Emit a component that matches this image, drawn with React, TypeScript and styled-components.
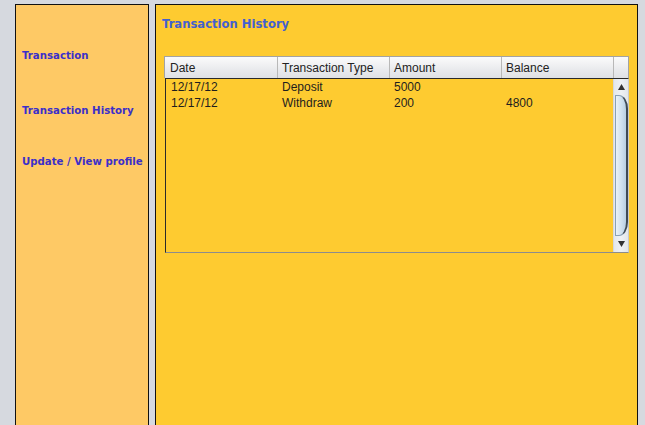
import React from "react";
import styled, { createGlobalStyle } from "styled-components";

const Global = createGlobalStyle`
  html, body { margin: 0; padding: 0; }
  body {
    background: #d6d9df;
    width: 645px;
    height: 425px;
    overflow: hidden;
    font-family: "Liberation Sans", Arial, sans-serif;
  }
`;

const Page = styled.div`
  display: flex;
  align-items: flex-start;
  gap: 6px;
  padding: 4px 0 0 15px;
  height: 421px;
  box-sizing: border-box;
`;

const Sidebar = styled.nav`
  width: 134px;
  height: 430px;
  box-sizing: border-box;
  background: #fec965;
  border: 1px solid #111;
  border-bottom: none;
  display: flex;
  flex-direction: column;
  padding: 44px 0 0 6px;
`;

const NavLink = styled.a<{ $gap: number }>`
  display: block;
  margin-top: ${(p) => p.$gap}px;
  font-family: "DejaVu Sans", Verdana, sans-serif;
  font-weight: bold;
  font-size: 10.2px;
  line-height: 13px;
  color: #3b2fc9;
  cursor: pointer;
`;

const Main = styled.main`
  width: 483px;
  height: 430px;
  box-sizing: border-box;
  background: #fecb30;
  border: 1px solid #111;
  border-bottom: none;
  padding: 11px 0 0 6px;
`;

const Title = styled.h1`
  margin: 0;
  font-family: "DejaVu Sans", Verdana, sans-serif;
  font-weight: bold;
  font-size: 11.6px;
  line-height: 16px;
  color: #4360cf;
`;

const Table = styled.div`
  margin: 24px 0 0 2px;
  width: 465px;
  display: flex;
  flex-direction: column;
`;

const HeaderRow = styled.div`
  display: grid;
  grid-template-columns: 113px 112px 112px 112px 1fr;
  height: 22px;
  box-sizing: border-box;
  border: 1px solid #a3a3a3;
  border-bottom: none;
  background: linear-gradient(#fbfbfb, #e9eaed 60%, #dfe1e5);
`;

const HeaderCell = styled.div`
  display: flex;
  align-items: center;
  padding-left: 4px;
  font-size: 12px;
  color: #222;
  border-right: 1px solid #b8b8b8;
  &:first-child { padding-left: 5px; }
  &:last-child { border-right: none; }
`;

const Body = styled.div`
  display: flex;
  height: 175px;
  margin-left: 1px;
  box-sizing: border-box;
  border-top: 1px solid #2a2a2a;
  border-left: 1px solid #2a2a2a;
  border-bottom: 1px solid #8c8c8c;
  border-right: 1px solid #c9c9c9;
`;

const Rows = styled.div`
  flex: 1;
  display: flex;
  flex-direction: column;
`;

const Row = styled.div`
  display: grid;
  grid-template-columns: 111px 112px 112px 112px;
  height: 16px;
`;

const Cell = styled.div`
  padding-left: 5px;
  font-size: 12px;
  line-height: 16px;
  color: #1e1e1e;
`;

const Scrollbar = styled.div`
  width: 15px;
  display: flex;
  flex-direction: column;
  align-items: center;
  background: linear-gradient(90deg, #e4e8ec, #eef1f4 50%, #e2e6ea);
  border-left: 1px solid #d5d9de;
`;

const Arrow = styled.svg`
  flex: none;
  margin: 5px 0;
`;

const Thumb = styled.div`
  flex: 1;
  width: 13px;
  margin-left: 1px;
  box-sizing: border-box;
  border: 1px solid #8aa0b4;
  border-right: 2px solid #3f4a55;
  border-radius: 0 9px 9px 0 / 0 14px 14px 0;
  background: linear-gradient(90deg, #eaf2f8, #cfe0ee 55%, #b9cfe2);
`;

const data = [
  { date: "12/17/12", type: "Deposit", amount: "5000", balance: "" },
  { date: "12/17/12", type: "Withdraw", amount: "200", balance: "4800" },
];

export default function App() {
  return (
    <>
      <Global />
      <Page>
        <Sidebar>
          <NavLink $gap={0}>Transaction</NavLink>
          <NavLink $gap={42}>Transaction History</NavLink>
          <NavLink $gap={38}>Update / View profile</NavLink>
        </Sidebar>
        <Main>
          <Title>Transaction History</Title>
          <Table>
            <HeaderRow>
              <HeaderCell>Date</HeaderCell>
              <HeaderCell>Transaction Type</HeaderCell>
              <HeaderCell>Amount</HeaderCell>
              <HeaderCell>Balance</HeaderCell>
              <HeaderCell />
            </HeaderRow>
            <Body>
              <Rows>
                {data.map((r, i) => (
                  <Row key={i}>
                    <Cell>{r.date}</Cell>
                    <Cell>{r.type}</Cell>
                    <Cell>{r.amount}</Cell>
                    <Cell>{r.balance}</Cell>
                  </Row>
                ))}
              </Rows>
              <Scrollbar>
                <Arrow width="7" height="6" viewBox="0 0 7 6">
                  <polygon points="3.5,0 7,6 0,6" fill="#333" />
                </Arrow>
                <Thumb />
                <Arrow width="7" height="6" viewBox="0 0 7 6">
                  <polygon points="0,0 7,0 3.5,6" fill="#333" />
                </Arrow>
              </Scrollbar>
            </Body>
          </Table>
        </Main>
      </Page>
    </>
  );
}
